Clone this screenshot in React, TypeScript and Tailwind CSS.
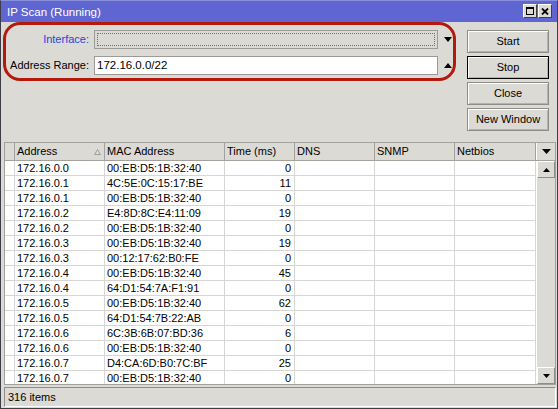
import React from "react";

const rows: [string, string, string][] = [
  ["172.16.0.0", "00:EB:D5:1B:32:40", "0"],
  ["172.16.0.1", "4C:5E:0C:15:17:BE", "11"],
  ["172.16.0.1", "00:EB:D5:1B:32:40", "0"],
  ["172.16.0.2", "E4:8D:8C:E4:11:09", "19"],
  ["172.16.0.2", "00:EB:D5:1B:32:40", "0"],
  ["172.16.0.3", "00:EB:D5:1B:32:40", "19"],
  ["172.16.0.3", "00:12:17:62:B0:FE", "0"],
  ["172.16.0.4", "00:EB:D5:1B:32:40", "45"],
  ["172.16.0.4", "64:D1:54:7A:F1:91", "0"],
  ["172.16.0.5", "00:EB:D5:1B:32:40", "62"],
  ["172.16.0.5", "64:D1:54:7B:22:AB", "0"],
  ["172.16.0.6", "6C:3B:6B:07:BD:36", "6"],
  ["172.16.0.6", "00:EB:D5:1B:32:40", "0"],
  ["172.16.0.7", "D4:CA:6D:B0:7C:BF", "25"],
  ["172.16.0.7", "00:EB:D5:1B:32:40", "0"],
];

function TriDown({ w = 8, h = 4 }: { w?: number; h?: number }) {
  return (
    <svg width={w} height={h} viewBox={`0 0 ${w} ${h}`} className="block">
      <polygon points={`0,0 ${w},0 ${w / 2},${h}`} fill="#000" />
    </svg>
  );
}
function TriUp({ w = 8, h = 4 }: { w?: number; h?: number }) {
  return (
    <svg width={w} height={h} viewBox={`0 0 ${w} ${h}`} className="block">
      <polygon points={`0,${h} ${w},${h} ${w / 2},0`} fill="#000" />
    </svg>
  );
}

function Btn({ label, def }: { label: string; def?: boolean }) {
  return (
    <div
      className={
        "h-[23px] w-[82px] flex items-center justify-center border shadow-[inset_1px_1px_0_#ffffff,inset_-1px_-1px_0_#b5b3ad] text-[11px] " +
        (def ? "border-black" : "border-[#8e8d89]")
      }
    >
      {label}
    </div>
  );
}

export default function App() {
  return (
    <div className="w-[558px] h-[409px] bg-[#dcdad4] border border-[#3d3d45] border-t-[#8a8fdc] flex flex-col relative overflow-hidden font-['Liberation_Sans',Arial,sans-serif] text-[11px] leading-[13px] text-black">
      {/* title bar */}
      <div className="h-[21px] bg-[#5f66d2] flex items-start pl-[6px] pt-[3px] shrink-0">
        <span className="text-white text-[11.5px] leading-[14px] mt-[1px]">IP Scan (Running)</span>
        <div className="ml-auto mr-[5px] flex gap-[1px]">
          <div className="w-[14px] h-[14px] bg-[#dcdad4] border border-[#404040] border-t-white border-l-white flex items-center justify-center">
            <div className="w-[8px] h-[8px] border border-black border-t-2" />
          </div>
          <div className="w-[14px] h-[14px] bg-[#dcdad4] border border-[#404040] border-t-white border-l-white flex items-center justify-center">
            <svg width="8" height="7" viewBox="0 0 8 7">
              <path d="M1 0.5 L7 6.5 M7 0.5 L1 6.5" stroke="#000" strokeWidth="1.8" />
            </svg>
          </div>
        </div>
      </div>

      {/* body */}
      <div className="flex-1 flex flex-col pl-[3px] pr-[1px] pb-[1px]">
        {/* top section */}
        <div className="h-[120px] flex pt-[8px] shrink-0">
          <div className="w-[463px] flex flex-col gap-[7px]">
            <div className="flex items-center h-[19px]">
              <div className="w-[85px] text-right text-[#2346df]">Interface:</div>
              <div className="ml-[5px] w-[344px] h-[19px] border border-[#9c9a96] p-[2px]">
                <div className="w-full h-full border border-dotted border-[#707070]" />
              </div>
              <div className="ml-[6px]">
                <TriDown w={8} h={5} />
              </div>
            </div>
            <div className="flex items-center h-[19px]">
              <div className="w-[85px] text-right">Address Range:</div>
              <div className="ml-[5px] w-[344px] h-[19px] border border-[#9c9a96] bg-white flex items-center pl-[2px] text-[11.5px]">
                172.16.0.0/22
              </div>
              <div className="ml-[6px]">
                <TriUp w={8} h={5} />
              </div>
            </div>
          </div>
          <div className="flex flex-col gap-[3px]">
            <Btn label="Start" />
            <Btn label="Stop" def />
            <Btn label="Close" />
            <Btn label="New Window" />
          </div>
        </div>

        {/* table */}
        <div className="h-[243px] w-[552px] border border-[#a3a19c] bg-white flex flex-col shrink-0">
          <div className="h-[18px] bg-[#dcdad4] border-b border-[#a3a19c] flex shrink-0">
            <div className="w-[10px] border-r border-[#a3a19c]" />
            <div className="w-[90px] border-r border-[#a3a19c] pl-[2px] flex items-center">
              <span>Address</span>
              <svg width="7" height="6" viewBox="0 0 7 6" className="ml-auto mr-[3px]">
                <polygon points="3.5,0.5 6.5,5.5 0.5,5.5" fill="none" stroke="#a19f9a" strokeWidth="1" />
              </svg>
            </div>
            <div className="w-[120px] border-r border-[#a3a19c] pl-[2px] flex items-center">MAC Address</div>
            <div className="w-[70px] border-r border-[#a3a19c] pl-[2px] flex items-center">Time (ms)</div>
            <div className="w-[80px] border-r border-[#a3a19c] pl-[2px] flex items-center">DNS</div>
            <div className="w-[80px] border-r border-[#a3a19c] pl-[2px] flex items-center">SNMP</div>
            <div className="w-[81px] border-r border-[#a3a19c] pl-[2px] flex items-center">Netbios</div>
            <div className="flex-1 flex items-center justify-center border-l border-white">
              <TriDown w={9} h={5} />
            </div>
          </div>
          <div className="flex-1 flex overflow-hidden">
            <div className="w-[531px] flex flex-col">
              {rows.map((r, i) => (
                <div key={i} className="h-[15px] shrink-0 flex border-b border-[#d6d6d6]">
                  <div className="w-[10px] border-r border-[#d6d6d6]" />
                  <div className="w-[90px] border-r border-[#d6d6d6] pl-[2px] flex items-center">{r[0]}</div>
                  <div className="w-[120px] border-r border-[#d6d6d6] pl-[2px] flex items-center">{r[1]}</div>
                  <div className="w-[70px] border-r border-[#d6d6d6] pr-[3px] flex items-center justify-end">{r[2]}</div>
                  <div className="w-[80px] border-r border-[#d6d6d6]" />
                  <div className="w-[80px] border-r border-[#d6d6d6]" />
                  <div className="w-[81px] border-r border-[#d6d6d6]" />
                </div>
              ))}
            </div>
            <div className="flex-1 bg-[#dcdad4] flex flex-col border-l border-white">
              <div className="h-[17px] border border-[#8e8d89] border-t-white border-l-white flex items-center justify-center">
                <TriUp w={7} h={4} />
              </div>
              <div className="flex-1" />
              <div className="h-[17px] border border-[#8e8d89] border-t-white border-l-white flex items-center justify-center">
                <TriDown w={7} h={4} />
              </div>
            </div>
          </div>
        </div>

        {/* status bar */}
        <div className="mt-[2px] h-[20px] w-[552px] border border-[#8e8d89] border-r-white border-b-white flex items-center pl-[3px] shrink-0">
          316 items
        </div>
      </div>

      {/* red annotation */}
      <div className="absolute left-[2px] top-[21px] w-[453px] h-[59px] border-[3px] border-[#b3190d] rounded-[17px] pointer-events-none" />
    </div>
  );
}
